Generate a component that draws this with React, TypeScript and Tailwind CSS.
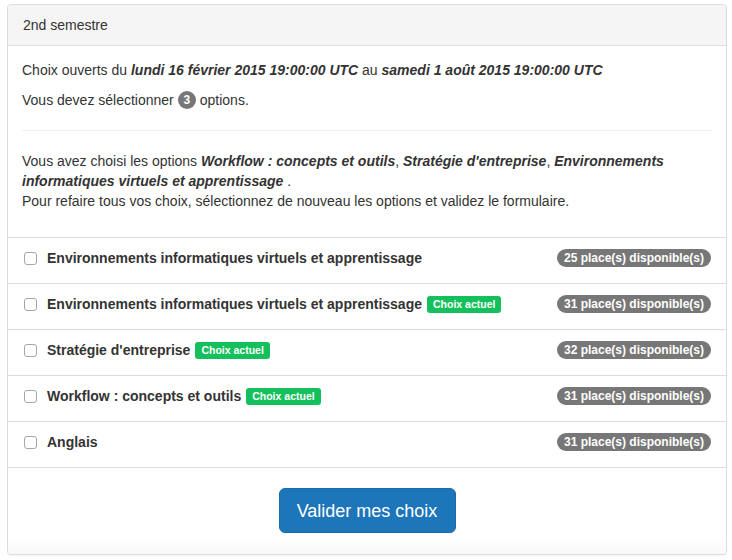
import React from 'react'

interface Option {
  id: number
  title: string
  places: number
  current: boolean
}

const options: Option[] = [
  { id: 1, title: 'Environnements informatiques virtuels et apprentissage', places: 25, current: false },
  { id: 2, title: 'Environnements informatiques virtuels et apprentissage', places: 31, current: true },
  { id: 3, title: "Stratégie d'entreprise", places: 32, current: true },
  { id: 4, title: 'Workflow : concepts et outils', places: 31, current: true },
  { id: 5, title: 'Anglais', places: 31, current: false },
]

export default function App() {
  return (
    <div className="min-h-[560px] bg-white pt-[4px] pl-[7px] text-[14px] leading-[20px] text-[#333]" style={{ fontFamily: '"Liberation Sans", Arial, sans-serif' }}>
      <div className="w-[720px] rounded-[4px] border border-[#ddd] bg-white shadow-[0_1px_1px_rgba(0,0,0,0.05)]">
        {/* Header */}
        <div className="rounded-t-[4px] border-b border-[#ddd] bg-[#f5f5f5] px-[15px] py-[10px]">
          2nd semestre
        </div>

        {/* Body */}
        <div className="px-[14px] pt-[14px] pb-[15px]">
          <p className="mb-[10px]">
            Choix ouverts du <b><i>lundi 16 février 2015 19:00:00 UTC</i></b> au <b><i>samedi 1 août 2015 19:00:00 UTC</i></b>
          </p>
          <p className="mb-[10px] flex items-center">
            Vous devez sélectionner
            <span className="mx-[4px] inline-flex h-[18px] min-w-[18px] items-center justify-center rounded-full bg-[#777] px-[5px] text-[12px] font-bold leading-none text-white">3</span>
            options.
          </p>
          <hr className="my-[20px] border-t border-[#eee]" />
          <p className="mb-[11px]">
            Vous avez choisi les options <b><i>Workflow : concepts et outils</i></b>, <b><i>Stratégie d'entreprise</i></b>, <b><i>Environnements informatiques virtuels et apprentissage</i></b> .
            <br />
            Pour refaire tous vos choix, sélectionnez de nouveau les options et validez le formulaire.
          </p>
        </div>

        {/* Options list */}
        <ul>
          {options.map((o) => (
            <li key={o.id} className="flex h-[46px] items-center justify-between border-t border-[#ddd] pb-[5px] pl-[16px] pr-[15px]">
              <label className="flex items-center font-bold">
                <input
                  type="checkbox"
                  className="mr-[10px] h-[13px] w-[13px] appearance-none rounded-[3px] border border-[#a6a6a6] bg-white"
                />
                {o.title}
                {o.current && (
                  <span className="ml-[5px] rounded-[3px] bg-[#13c05c] px-[6px] pt-[2px] pb-[3px] text-[10.5px] leading-[12px] font-bold text-white">
                    Choix actuel
                  </span>
                )}
              </label>
              <span className="rounded-[10px] bg-[#777] px-[7px] py-[3px] text-[12px] leading-[12px] font-bold text-white">
                {o.places} place(s) disponible(s)
              </span>
            </li>
          ))}
        </ul>

        {/* Footer */}
        <div className="flex justify-center rounded-b-[4px] border-t border-[#ddd] bg-gradient-to-b from-white from-80% to-[#f9f9f9] pt-[20px] pb-[21px]">
          <button className="h-[45px] w-[177px] rounded-[6px] border border-[#1a6bad] bg-[#1d76b9] text-[18px] text-white">
            Valider mes choix
          </button>
        </div>
      </div>
    </div>
  )
}
